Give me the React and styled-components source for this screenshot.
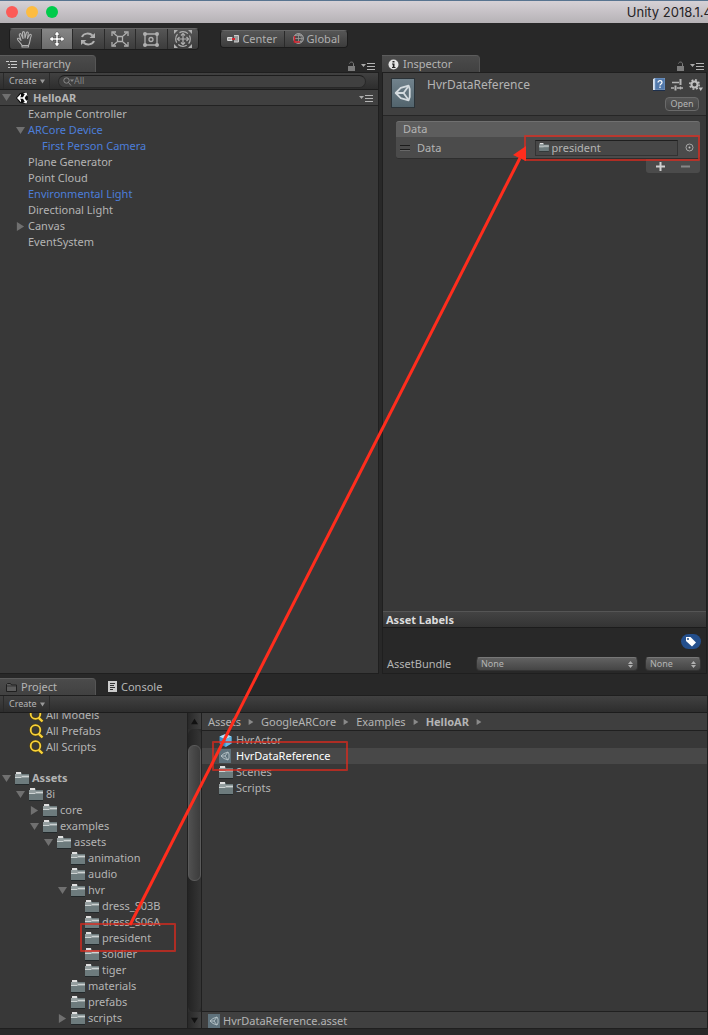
import React from "react";
import styled, { createGlobalStyle, css } from "styled-components";

const Global = createGlobalStyle`
  * { box-sizing: border-box; }
  html, body { margin: 0; padding: 0; background: #282828; }
  body { font-family: "Noto Sans", "Open Sans", sans-serif; font-size: 11px; line-height: 16px; color: #b4b4b4; }
  button, input, select { font: inherit; color: inherit; margin: 0; }
  svg { display: block; flex: none; }
`;

const Window = styled.div`
  position: relative;
  display: flex;
  flex-direction: column;
  height: 100vh;
  min-height: 720px;
  overflow: hidden;
  background: #282828;
`;

const TitleBar = styled.header`
  display: flex;
  align-items: center;
  gap: 8px;
  height: 23px;
  padding-left: 6px;
  flex: none;
  overflow: hidden;
  border-top: 1px solid #587490;
  background: linear-gradient(#d6d1d6, #b6b2b6);
`;

const Light = styled.button`
  width: 12px;
  height: 12px;
  padding: 0;
  flex: none;
  border: 0;
  border-radius: 50%;
  background: ${(p) => p.$color};
`;

const Title = styled.h1`
  margin: 0 -4px 0 auto;
  font: 400 13px/20px Inter, sans-serif;
  color: #252325;
  white-space: nowrap;
`;

const Toolbar = styled.div`
  display: flex;
  align-items: center;
  gap: 21px;
  height: 32px;
  padding: 0 9px;
  flex: none;
`;

const ButtonGroup = styled.div`
  display: flex;
  width: ${(p) => p.$width}px;
  overflow: hidden;
  border: 1px solid #1c1c1c;
  border-top-color: #666;
  border-radius: 4px;
`;

const ToolButton = styled.button`
  display: flex;
  align-items: center;
  justify-content: center;
  gap: 3px;
  flex: 1 1 0;
  height: ${(p) => p.$height || 20}px;
  padding: 0;
  border: 0;
  color: ${(p) => (p.$active ? "#fff" : "#b0b0b0")};
  background: ${(p) => (p.$active ? "linear-gradient(#868686, #6c6c6c)" : "linear-gradient(#565656, #3c3c3c)")};
  & + & { border-left: 1px solid #2a2a2a; }
`;

const Upper = styled.div`
  display: flex;
  flex: 619 1 0;
  min-height: 0;
  gap: 3px;
`;

const Panel = styled.section`
  display: flex;
  flex-direction: column;
  flex: ${(p) => p.$grow || 1} 1 0;
  min-width: 0;
  min-height: 0;
`;

const TabBar = styled.div`
  display: flex;
  align-items: flex-end;
  height: 17px;
  flex: none;
`;

const Tab = styled.button`
  display: flex;
  align-items: center;
  gap: 4px;
  height: 17px;
  min-width: ${(p) => p.$width}px;
  padding: 0 6px;
  border: 0;
  ${(p) =>
    p.$active &&
    css`
      border-top: 1px solid #5c5c5c;
      border-right: 1px solid #555;
      border-radius: 0 4px 0 0;
      background: linear-gradient(#4b4b4b, #414141);
    `}
  ${(p) => !p.$active && css`background: none; padding-left: 12px;`}
`;

const TabTools = styled.div`
  display: flex;
  align-items: center;
  gap: 6px;
  height: 12px;
  margin-left: auto;
  padding-right: 4px;
`;

const IconButton = styled.button`
  display: flex;
  padding: 0;
  border: 0;
  background: none;
`;

const Body = styled.div`
  display: flex;
  flex-direction: column;
  flex: 1;
  min-height: 0;
  border: solid #1f1f1f;
  border-width: 1px 1px 1px 0;
  background: #383838;
  ${(p) => p.$boxed && css`border-left-width: 1px; margin-right: 1px;`}
`;

const Strip = styled.div`
  display: flex;
  align-items: center;
  height: 17px;
  flex: none;
  border-bottom: 1px solid #1c1c1c;
  background: linear-gradient(#414141, #2d2d2d);
`;

const CreateButton = styled.button`
  display: flex;
  align-items: center;
  justify-content: space-between;
  width: 47px;
  height: 16px;
  margin-left: 3px;
  padding: 0 4px 0 5px;
  border: solid #2a2a2a;
  border-width: 0 1px;
  background: none;
  font-size: 9px;
`;

const SearchBox = styled.label`
  display: flex;
  align-items: center;
  flex: 1;
  height: 13px;
  margin: 0 12px 0 8px;
  padding-left: 4px;
  border: 1px solid #282828;
  border-top-color: #1d1d1d;
  border-radius: 7px;
  background: #404040;
`;

const SearchInput = styled.input`
  flex: 1;
  min-width: 0;
  height: 12px;
  padding: 0;
  border: 0;
  outline: 0;
  background: none;
  font-size: 9px;
  &::placeholder { color: #848484; opacity: 1; }
`;

const SceneRow = styled.div`
  display: flex;
  align-items: center;
  gap: 5px;
  height: 16px;
  padding: 0 5px 0 2px;
  flex: none;
  border-bottom: 1px solid #222;
  background: #404040;
  font-weight: 700;
  svg:last-child { margin-left: auto; }
`;

const List = styled.ul`
  margin: 0;
  padding: 0;
  list-style: none;
`;

const Row = styled.li`
  position: relative;
  display: flex;
  align-items: center;
  height: 16px;
  padding-left: ${(p) => (p.$file ? 16 : p.$level * 14)}px;
  white-space: nowrap;
  font-weight: ${(p) => (p.$bold ? 700 : 400)};
  color: ${(p) => (p.$link ? "#4c7eda" : p.$selected ? "#fff" : "inherit")};
  background: ${(p) => (p.$selected ? "#484848" : "none")};
`;

const Fold = styled.span`
  display: flex;
  width: 14px;
  padding-left: 2px;
  flex: none;
`;

const RowIcon = styled.span`
  display: flex;
  width: 18px;
  padding-left: 1px;
  flex: none;
`;

/* red annotation frame drawn over the content it belongs to */
const Highlight = styled.span`
  position: absolute;
  z-index: 2;
  top: ${(p) => p.$top}px;
  left: ${(p) => p.$left};
  right: ${(p) => p.$right || "auto"};
  width: ${(p) => p.$width || "auto"};
  height: ${(p) => p.$height}px;
  border: 2px solid rgba(225, 42, 28, 0.7);
  border-radius: 1px;
  pointer-events: none;
`;

const AssetHeader = styled.div`
  display: flex;
  gap: 12px;
  height: 43px;
  padding: 5px 3px 0 8px;
  flex: none;
  border-bottom: 1px solid #262626;
  background: #404040;
`;

const AssetThumb = styled.div`
  display: flex;
  align-items: center;
  justify-content: center;
  width: 24px;
  height: 30px;
  border: 1px solid #2b3338;
  background: linear-gradient(#71828c, #52646d);
`;

const AssetName = styled.h2`
  margin: 0;
  font-size: 12px;
  font-weight: 400;
  line-height: 14px;
`;

const AssetActions = styled.div`
  display: flex;
  flex-direction: column;
  align-items: flex-end;
  gap: 6px;
  margin-left: auto;
`;

const IconLine = styled.div`
  display: flex;
  align-items: center;
  gap: 6px;
  height: 13px;
`;

const OpenButton = styled.button`
  width: 34px;
  height: 14px;
  padding: 0;
  margin-right: 4px;
  border: 1px solid #6a6a6a;
  border-radius: 4px;
  background: linear-gradient(#555, #444);
  font-size: 9px;
  line-height: 12px;
`;

const ArrayBox = styled.div`
  margin: 5px 6px 0 13px;
`;

const ArrayHead = styled.div`
  height: 16px;
  padding-left: 7px;
  border-top: 1px solid #707070;
  border-radius: 3px 3px 0 0;
  background: #5d5d5d;
  line-height: 14px;
`;

const ArrayRow = styled.div`
  position: relative;
  display: flex;
  align-items: center;
  height: 22px;
  padding: 0 6px 0 4px;
  border-bottom: 1px solid #2e2e2e;
  border-radius: 0 0 3px 3px;
  background: #4b4b4b;
`;

const Grip = styled.span`
  width: 10px;
  height: 5px;
  margin-right: 7px;
  border: solid #1c1c1c;
  border-width: 1px 0;
  box-shadow: 0 1px #686868;
`;

const FieldLabel = styled.label`
  width: 40%;
  flex: none;
`;

const ObjectField = styled.div`
  display: flex;
  align-items: center;
  gap: 3px;
  flex: 1;
  min-width: 0;
  height: 16px;
  padding-left: 3px;
  margin-right: 7px;
  border: 1px solid #333;
  border-top-color: #1f1f1f;
  background: #474747;
`;

const ObjectInput = styled.input`
  flex: 1;
  min-width: 0;
  height: 14px;
  padding: 0;
  border: 0;
  outline: 0;
  background: none;
`;

const ArrayFoot = styled.div`
  display: flex;
  justify-content: space-evenly;
  align-items: center;
  gap: 6px;
  width: 54px;
  height: 14px;
  margin-left: auto;
  border-radius: 0 0 3px 3px;
  background: #4b4b4b;
`;

const LabelsBar = styled.h3`
  height: 17px;
  margin: auto 0 0;
  padding-left: 3px;
  flex: none;
  border-top: 1px solid #555;
  border-bottom: 1px solid #1c1c1c;
  background: linear-gradient(#434343, #343434);
  font-size: 11px;
  font-weight: 700;
  line-height: 15px;
  color: #dcdcdc;
`;

const LabelsBody = styled.div`
  display: flex;
  flex-direction: column;
  align-items: stretch;
  gap: 8px;
  height: 45px;
  padding: 6px 5px 0 4px;
  flex: none;
  background: #282828;
`;

const TagButton = styled.button`
  display: flex;
  align-items: center;
  justify-content: center;
  align-self: flex-end;
  width: 20px;
  height: 15px;
  padding: 0;
  border: 0;
  border-radius: 8px;
  background: #244f8c;
`;

const BundleRow = styled.div`
  display: flex;
  align-items: center;
  gap: 7px;
  height: 14px;
`;

const BundleLabel = styled.label`
  width: 82px;
  flex: none;
`;

const SelectBox = styled.div`
  position: relative;
  display: flex;
  flex: ${(p) => (p.$fixed ? "0 0 56px" : "1 1 0")};
`;

const Select = styled.select`
  appearance: none;
  width: 100%;
  height: 14px;
  padding: 0 4px;
  border: 1px solid #333;
  border-top-color: #777;
  border-radius: 4px;
  background: linear-gradient(#616161, #454545);
  font-size: 9px;
  line-height: 12px;
`;

const SelectArrows = styled.span`
  position: absolute;
  right: 5px;
  top: 4px;
  pointer-events: none;
`;

const Lower = styled.section`
  display: flex;
  flex-direction: column;
  flex: 351 1 0;
  min-height: 0;
  padding: 4px 0 6px;
`;

const Split = styled.div`
  display: flex;
  flex: 1;
  min-height: 0;
`;

const TreePane = styled.div`
  width: 187px;
  flex: none;
  overflow: hidden;
  background: #383838;
`;

const SavedSearches = styled(List)`
  margin: -6px 0 15px;
`;

const ScrollBar = styled.div`
  display: flex;
  flex-direction: column;
  width: 15px;
  flex: none;
  border: solid #202020;
  border-width: 0 1px;
  background: #2d2d2d;
`;

const ScrollButton = styled.button`
  display: flex;
  align-items: center;
  justify-content: center;
  height: 16px;
  padding: 0;
  flex: none;
  border: 0;
  background: linear-gradient(90deg, #282828, #404040);
`;

const Track = styled.div`
  flex: 1;
  padding-top: 16px;
  border-radius: 6px;
  background: linear-gradient(90deg, #232323, #353535);
`;

const Thumb = styled.div`
  height: 51%;
  border: 1px solid #5a5a5a;
  border-radius: 6px;
  background: linear-gradient(90deg, #505050, #3c3c3c);
`;

const FilePane = styled.div`
  display: flex;
  flex-direction: column;
  flex: 1;
  min-width: 0;
  background: #383838;
`;

const Breadcrumbs = styled.nav`
  display: flex;
  align-items: center;
  gap: 7px;
  height: 18px;
  padding-left: 6px;
  flex: none;
  border-bottom: 1px solid #202020;
  background: #3f3f3f;
`;

const Crumb = styled.a`
  color: inherit;
  text-decoration: none;
  font-weight: ${(p) => (p.$current ? 700 : 400)};
`;

const FileList = styled(List)`
  flex: 1;
  padding-top: 1px;
`;

const StatusBar = styled.footer`
  display: flex;
  align-items: center;
  gap: 3px;
  height: 17px;
  padding: 2px 0 0 6px;
  flex: none;
  border-top: 1px solid #202020;
  background: #404040;
`;

const ArrowLayer = styled.svg`
  position: absolute;
  inset: 0;
  width: 100%;
  height: 100%;
  z-index: 3;
  pointer-events: none;
`;

const Tri = ({ dir = "down", size = 9, color = "#707070" }) => {
  const d = { down: "M0 1h10L5 9z", right: "M1 0v10l8-5z", up: "M0 9h10L5 1z" }[dir];
  return (
    <svg width={size} height={size} viewBox="0 0 10 10">
      <path d={d} fill={color} />
    </svg>
  );
};

const FolderIcon = ({ size = 14 }) => (
  <svg width={size} height={size - 1} viewBox="0 0 14 13">
    <path d="M0 2h1V0h5l1 2h7v10H0z" fill="#6d7b7d" />
    <path d="M1 2V0h5v2z" fill="#e0e0e0" />
    <path d="M0 2h6l1 1h7v3H0z" fill="#949e9f" />
    <path d="M0 5.500h6l1-1h7" fill="none" stroke="#cdd3d3" />
    <path d="M0 12.500h14" stroke="#22282a" />
  </svg>
);

const UnityMark = ({ size = 16, color = "#d4dbdf" }) => (
  <svg width={size} height={size} viewBox="0 0 16 16" fill="none" stroke={color} strokeWidth="1.600">
    <path d="M1.500 8 6 3.500 13 1.500 14 4.500v7L13 14.500 6 12.500z" strokeLinejoin="round" />
    <path d="M2 8h6.500M8.500 8l4.300-6M8.500 8l4.300 6" />
  </svg>
);

const UnityLogo = () => (
  <svg width="12" height="12" viewBox="0 0 12 12">
    <path d="M0 6 4 1 11 0l1 6-1 6-7-1z" fill="#0c0c0c" />
    <path d="M1 6 5 1.800V4L4 5.200h3L8.800 2 7 1.300 10.600.6 11.500 4l-1.200-.8L8.700 6l1.600 2.800 1.200-.8-.9 3.400L7 10.700 8.800 10 7 6.800H4L5 8v2.200z" fill="#fff" />
  </svg>
);

const AssetIcon = () => (
  <svg width="12" height="14" viewBox="0 0 12 14">
    <path d="M0 0h12v14H0z" fill="#5f727c" />
    <path d="M2 7 5 4.500l4-1.500 1 2v4L9 11l-4-1.500zM2 7h4l3-4M6 7l3 4" fill="none" stroke="#b9c5ca" strokeWidth=".9" />
  </svg>
);

const CubeIcon = () => (
  <svg width="13" height="13" viewBox="0 0 13 13">
    <path d="M6.500 0 12.500 2.500v7L6.500 13l-6-3.500v-7z" fill="#3a8fc8" />
    <path d="M.5 2.500 6.500 0l6 2.500-6 3z" fill="#b4e0f4" />
    <path d="M6.500 5.500v7.500l6-3.500v-7z" fill="#66b7e2" />
  </svg>
);

const MagnifierIcon = () => (
  <svg width="15" height="15" viewBox="0 0 15 15" fill="none">
    <circle cx="6.500" cy="6" r="4.800" stroke="#4d3f10" strokeWidth="3" />
    <path d="m9.500 9.500 4 4" stroke="#4d3f10" strokeWidth="3.500" />
    <circle cx="6.500" cy="6" r="4.800" stroke="#f8d23a" strokeWidth="1.800" />
    <path d="m9.800 9.800 3.700 3.700" stroke="#f8d23a" strokeWidth="2.400" />
  </svg>
);

const LockIcon = () => (
  <svg width="8" height="10" viewBox="0 0 8 10">
    <path d="M1 5h7v5H1z" fill="#7c7c7c" />
    <path d="M2.500 2.500C3 .5 6.500.500 6.500 3v2" fill="none" stroke="#7c7c7c" />
  </svg>
);

const MenuIcon = () => (
  <svg width="14" height="8" viewBox="0 0 14 8">
    <path d="M0 2h5L2.500 5z" fill="#aaa" />
    <path d="M6 1.500h8M6 4.500h8M6 7.500h8" stroke="#b4b4b4" />
  </svg>
);

const HierarchyIcon = () => (
  <svg width="11" height="9" viewBox="0 0 11 9" stroke="#ccc">
    <path d="M0 1.500h3M4 1.500h7M2 4.500h2M5 4.500h6M2 7.500h2M5 7.500h6" />
  </svg>
);

const InfoIcon = () => (
  <svg width="11" height="11" viewBox="0 0 11 11">
    <circle cx="5.500" cy="5.500" r="5" fill="#e4e4e4" />
    <path d="M4.500 2h2v1.500h-2zM4 4.500h2.500v3.500h1v1H4V8h.8V5.500H4z" fill="#222" />
  </svg>
);

const ProjectIcon = () => (
  <svg width="11" height="9" viewBox="0 0 11 9">
    <path d="M.5 2V1.500L1.500.5h3l1 1.500h5v6.500H.5z" fill="#5c5c5c" stroke="#1f1f1f" />
    <path d="M1 3h9" stroke="#333" />
  </svg>
);

const ConsoleIcon = () => (
  <svg width="9" height="11" viewBox="0 0 9 11">
    <path d="M0 0h9v11H0z" fill="#ccc" />
    <path d="M2 2.500h5M2 4.500h4M2 6.500h5M2 8.500h3" stroke="#333" />
  </svg>
);

const HandIcon = () => (
  <svg width="18" height="18" viewBox="0 0 18 18" fill="none" stroke="currentColor" strokeWidth="1.100" strokeLinejoin="round" strokeLinecap="round">
    <path d="M6 15.500C5.500 13.500 3 12 1.500 9.500c-.5-1.200 1-1.700 1.800-.9L5 10.500 3.300 5c-.3-1.400 1.400-1.900 1.900-.6L7 8.500 6.500 2.700c0-1.500 1.900-1.500 2.100 0L9 8l1.400-5.200c.4-1.400 2.100-.9 1.900.5L11.500 8.500l2-3.500c.8-1.200 2.200-.4 1.700.9-1.500 3.600-1 6.600-2.700 9.600zM6 15.500v1.500h6.500v-1.500" />
  </svg>
);

const MoveIcon = () => (
  <svg width="16" height="16" viewBox="0 0 16 16" fill="#fff" stroke="#333" strokeWidth=".5">
    <path d="M8 0 11 4H9v3h3V5l4 3-4 3V9H9v3h2l-3 4-3-4h2V9H4v2L0 8l4-3v2h3V4H5z" />
  </svg>
);

const RotateIcon = () => (
  <svg width="16" height="16" viewBox="0 0 16 16" fill="none" stroke="currentColor" strokeWidth="2">
    <path d="M2 6C3.500 2 9.500 1.500 12.500 4.500M14 10c-1.500 4-7.500 4.500-10.500 1.500" />
    <path d="M15 2v5H9.500zM1 14V9h5.500z" fill="currentColor" stroke="none" />
  </svg>
);

const ScaleIcon = () => (
  <svg width="18" height="16" viewBox="0 0 18 16" fill="none" stroke="currentColor" strokeWidth="1.300">
    <path d="M6.500 5.500h5v5h-5z" />
    <path d="M6 5 2 1.500M12 5l4-3.500M6 11l-4 3.500M12 11l4 3.500" />
    <path d="M1 5V1h4M13 1h4v4M1 11v4h4M17 11v4h-4" />
  </svg>
);

const RectIcon = () => (
  <svg width="18" height="17" viewBox="0 0 18 17" fill="none" stroke="currentColor" strokeWidth="1.300">
    <path d="M3 3h12v11H3z" />
    <circle cx="9" cy="8.500" r="2" />
    <g fill="currentColor" stroke="none">
      <circle cx="3" cy="3" r="2" />
      <circle cx="15" cy="3" r="2" />
      <circle cx="3" cy="14" r="2" />
      <circle cx="15" cy="14" r="2" />
    </g>
  </svg>
);

const TransformIcon = () => (
  <svg width="20" height="18" viewBox="0 0 20 18" fill="none" stroke="currentColor" strokeWidth="1.200">
    <circle cx="10" cy="9" r="7.300" strokeDasharray="9 2.500" strokeDashoffset="4" />
    <path d="M10 4v10M5 9h10" />
    <path d="m8 5.500 2-2 2 2M8 12.500l2 2 2-2M6.500 7l-2 2 2 2M13.500 7l2 2-2 2" />
    <path d="M1 0h4L1 4zM19 0h-4l4 4zM1 18h4l-4-4zM19 18h-4l4-4z" fill="currentColor" stroke="none" />
  </svg>
);

const CenterIcon = () => (
  <svg width="12" height="8" viewBox="0 0 12 8">
    <path d="M.6 2.500h4.500v3H.6z" fill="#aaa" stroke="#ddd" />
    <path d="M7 .5h4.500v6.500H7" fill="#999" stroke="#ccc" />
    <path d="M5 4h3" stroke="#d8202c" strokeWidth="2" />
  </svg>
);

const GlobeIcon = () => (
  <svg width="12" height="12" viewBox="0 0 12 12" fill="none">
    <circle cx="6.500" cy="5.500" r="4.800" stroke="#bbb" />
    <path d="M6.500.5v10M2 5.500h9M3 2.500h7M3 8.500h7M6.500.5c4 3 4 7 0 10" stroke="#999" strokeWidth=".8" />
    <path d="M2.500 3v6H8" stroke="#d3202c" strokeWidth="1.500" />
  </svg>
);

const HelpIcon = () => (
  <svg width="12" height="13" viewBox="0 0 12 13">
    <path d="M0 1h12v12H0z" fill="#1d2f4c" />
    <path d="M0 1 2 0v12H0z" fill="#d8e2ee" />
    <path d="M2 0h10v11.500H2z" fill="#5279ab" stroke="#8fb0d8" strokeWidth=".6" />
    <path d="M5 4.500C5 2 9 2 9 4.500 9 6 7 6 7 7.500M7 8.500V10" stroke="#fff" strokeWidth="1.200" fill="none" />
  </svg>
);

const SlidersIcon = () => (
  <svg width="12" height="12" viewBox="0 0 12 12" stroke="#b4b4b4" strokeWidth="1.300">
    <path d="M1 3.500h7M0 9h3M6 9h6" />
    <path d="M9.500 0v6M4.500 6.500v5" strokeWidth="2" />
    <path d="M9.500 7.500v3" />
  </svg>
);

const GearIcon = () => (
  <svg width="14" height="12" viewBox="0 0 14 12" fill="none">
    <circle cx="5.500" cy="5.500" r="3" stroke="#c0c0c0" strokeWidth="2" />
    <circle cx="5.500" cy="5.500" r="4.700" stroke="#c0c0c0" strokeWidth="1.600" strokeDasharray="1.850 1.850" />
    <path d="M9.500 8.500H14L11.700 12z" fill="#c0c0c0" />
  </svg>
);

const PickerIcon = () => (
  <svg width="9" height="9" viewBox="0 0 9 9">
    <circle cx="4.500" cy="4.500" r="3.500" fill="none" stroke="#a8a8a8" />
    <circle cx="4.500" cy="4.500" r="1" fill="#c0c0c0" />
  </svg>
);

const SignIcon = ({ plus }) => (
  <svg width="9" height="9" viewBox="0 0 9 9" stroke={plus ? "#d0d0d0" : "#868686"} strokeWidth="2">
    <path d={plus ? "M0 4.500h9M4.500 0v9" : "M0 4.500h9"} />
  </svg>
);

const TagIcon = () => (
  <svg width="12" height="11" viewBox="0 0 12 11">
    <path d="M1 1h4.500L11 6.500 7 10.500 1 5z" fill="#fff" />
    <circle cx="3" cy="3" r="1" fill="#244f8c" />
  </svg>
);

const SearchIcon = () => (
  <svg width="11" height="9" viewBox="0 0 11 9" fill="none">
    <circle cx="3.500" cy="3.500" r="2.700" stroke="#8a8a8a" />
    <path d="m5.500 5.500 2.500 3" stroke="#8a8a8a" />
    <path d="M7 2.500h4L9 5z" fill="#8a8a8a" />
  </svg>
);

const UpDown = () => (
  <svg width="5" height="7" viewBox="0 0 5 7" fill="#b0b0b0">
    <path d="M0 3 2.500 0 5 3zM0 4h5L2.500 7z" />
  </svg>
);

const tools = [
  ["Hand", HandIcon],
  ["Move", MoveIcon],
  ["Rotate", RotateIcon],
  ["Scale", ScaleIcon],
  ["Rect", RectIcon],
  ["Transform", TransformIcon],
];

const objects = [
  { name: "Example Controller", level: 1 },
  { name: "ARCore Device", level: 1, fold: "down", link: true },
  { name: "First Person Camera", level: 2, link: true },
  { name: "Plane Generator", level: 1 },
  { name: "Point Cloud", level: 1 },
  { name: "Environmental Light", level: 1, link: true },
  { name: "Directional Light", level: 1 },
  { name: "Canvas", level: 1, fold: "right" },
  { name: "EventSystem", level: 1 },
];

const folders = [
  { name: "Assets", level: 0, fold: "down", bold: true },
  { name: "8i", level: 1, fold: "down" },
  { name: "core", level: 2, fold: "right" },
  { name: "examples", level: 2, fold: "down" },
  { name: "assets", level: 3, fold: "down" },
  { name: "animation", level: 4 },
  { name: "audio", level: 4 },
  { name: "hvr", level: 4, fold: "down" },
  { name: "dress_S03B", level: 5 },
  { name: "dress_S06A", level: 5 },
  { name: "president", level: 5, marked: true },
  { name: "soldier", level: 5 },
  { name: "tiger", level: 5 },
  { name: "materials", level: 4 },
  { name: "prefabs", level: 4 },
  { name: "scripts", level: 4, fold: "right" },
  { name: "", level: 4 },
];

const TreeRow = ({ item, icon }) => (
  <Row $level={item.level} $bold={item.bold} $link={item.link}>
    <Fold>{item.fold && <Tri dir={item.fold} />}</Fold>
    {icon ? <RowIcon>{icon}</RowIcon> : null}
    {item.name}
    {item.marked && <Highlight $top={-7} $left="80px" $width="96px" $height={29} />}
  </Row>
);

const PanelTools = () => (
  <TabTools>
    <IconButton aria-label="Lock"><LockIcon /></IconButton>
    <IconButton aria-label="Panel menu"><MenuIcon /></IconButton>
  </TabTools>
);

const Create = () => (
  <CreateButton>
    Create <Tri size={5} color="#999" />
  </CreateButton>
);

const Hierarchy = () => (
  <Panel $grow={379}>
    <TabBar>
      <Tab $active $width={96}><HierarchyIcon /> Hierarchy</Tab>
      <PanelTools />
    </TabBar>
    <Body>
      <Strip>
        <Create />
        <SearchBox>
          <SearchIcon />
          <SearchInput aria-label="Search hierarchy" placeholder="All" />
        </SearchBox>
      </Strip>
      <SceneRow>
        <Tri /> <UnityLogo /> HelloAR <MenuIcon />
      </SceneRow>
      <List>
        {objects.map((o) => (
          <TreeRow key={o.name} item={o} />
        ))}
      </List>
    </Body>
  </Panel>
);

const Inspector = () => (
  <Panel $grow={326}>
    <TabBar>
      <Tab $active $width={98}><InfoIcon /> Inspector</Tab>
      <PanelTools />
    </TabBar>
    <Body $boxed>
      <AssetHeader>
        <AssetThumb><UnityMark size={18} /></AssetThumb>
        <AssetName>HvrDataReference</AssetName>
        <AssetActions>
          <IconLine>
            <IconButton aria-label="Help"><HelpIcon /></IconButton>
            <IconButton aria-label="Presets"><SlidersIcon /></IconButton>
            <IconButton aria-label="Settings"><GearIcon /></IconButton>
          </IconLine>
          <OpenButton>Open</OpenButton>
        </AssetActions>
      </AssetHeader>
      <ArrayBox>
        <ArrayHead>Data</ArrayHead>
        <ArrayRow>
          <Grip />
          <FieldLabel htmlFor="data-object">Data</FieldLabel>
          <ObjectField>
            <FolderIcon size={10} />
            <ObjectInput id="data-object" defaultValue="president" />
          </ObjectField>
          <IconButton aria-label="Pick object"><PickerIcon /></IconButton>
          <Highlight $top={-2} $left="42%" $right="0" $height={26} />
        </ArrayRow>
        <ArrayFoot>
          <IconButton aria-label="Add"><SignIcon plus /></IconButton>
          <IconButton aria-label="Remove"><SignIcon /></IconButton>
        </ArrayFoot>
      </ArrayBox>
      <LabelsBar>Asset Labels</LabelsBar>
      <LabelsBody>
        <TagButton aria-label="Labels"><TagIcon /></TagButton>
        <BundleRow>
          <BundleLabel htmlFor="bundle">AssetBundle</BundleLabel>
          <SelectBox>
            <Select id="bundle"><option>None</option></Select>
            <SelectArrows><UpDown /></SelectArrows>
          </SelectBox>
          <SelectBox $fixed>
            <Select aria-label="Variant"><option>None</option></Select>
            <SelectArrows><UpDown /></SelectArrows>
          </SelectBox>
        </BundleRow>
      </LabelsBody>
    </Body>
  </Panel>
);

const crumbs = ["Assets", "GoogleARCore", "Examples", "HelloAR"];

const Project = () => (
  <Lower>
    <TabBar>
      <Tab $active $width={96}><ProjectIcon /> Project</Tab>
      <Tab><ConsoleIcon /> Console</Tab>
    </TabBar>
    <Body>
      <Strip>
        <Create />
      </Strip>
      <Split>
        <TreePane>
          <SavedSearches>
            {["All Models", "All Prefabs", "All Scripts"].map((n) => (
              <TreeRow key={n} item={{ name: n, level: 1 }} icon={<MagnifierIcon />} />
            ))}
          </SavedSearches>
          <List>
            {folders.map((f, i) => (
              <TreeRow key={i} item={f} icon={<FolderIcon />} />
            ))}
          </List>
        </TreePane>
        <ScrollBar>
          <ScrollButton aria-label="Scroll up"><Tri dir="up" size={7} color="#111" /></ScrollButton>
          <Track><Thumb /></Track>
          <ScrollButton aria-label="Scroll down"><Tri size={7} color="#111" /></ScrollButton>
        </ScrollBar>
        <FilePane>
          <Breadcrumbs>
            {crumbs.map((c, i) => (
              <React.Fragment key={c}>
                <Crumb href="#" $current={i === crumbs.length - 1}>{c}</Crumb>
                <Tri dir="right" size={6} color="#8a8a8a" />
              </React.Fragment>
            ))}
          </Breadcrumbs>
          <FileList>
            <Row $file><RowIcon><CubeIcon /></RowIcon>HvrActor</Row>
            <Row $file $selected>
              <RowIcon><AssetIcon /></RowIcon>HvrDataReference
              <Highlight $top={-7} $left="10px" $width="136px" $height={30} />
            </Row>
            <Row $file><RowIcon><FolderIcon /></RowIcon>Scenes</Row>
            <Row $file><RowIcon><FolderIcon /></RowIcon>Scripts</Row>
          </FileList>
          <StatusBar><AssetIcon /> HvrDataReference.asset</StatusBar>
        </FilePane>
      </Split>
    </Body>
  </Lower>
);

export default function App() {
  return (
    <Window>
      <Global />
      <TitleBar>
        <Light $color="#fc5b57" aria-label="Close" />
        <Light $color="#fdbc40" aria-label="Minimize" />
        <Light $color="#00cb4b" aria-label="Zoom" />
        <Title>Unity 2018.1.4</Title>
      </TitleBar>
      <Toolbar>
        <ButtonGroup $width={190}>
          {tools.map(([name, Icon]) => (
            <ToolButton key={name} aria-label={name} $active={name === "Move"}>
              <Icon />
            </ToolButton>
          ))}
        </ButtonGroup>
        <ButtonGroup $width={128}>
          <ToolButton $height={16}><CenterIcon /> Center</ToolButton>
          <ToolButton $height={16}><GlobeIcon /> Global</ToolButton>
        </ButtonGroup>
      </Toolbar>
      <Upper>
        <Hierarchy />
        <Inspector />
      </Upper>
      <Project />
      <ArrowLayer viewBox="0 0 708 1035" preserveAspectRatio="none" aria-hidden="true">
        <path d="M130 925 520 158" stroke="#ff2d1d" strokeWidth="3" />
        <path d="M526 146 513 155 526 161z" fill="#ff2d1d" />
      </ArrowLayer>
    </Window>
  );
}
